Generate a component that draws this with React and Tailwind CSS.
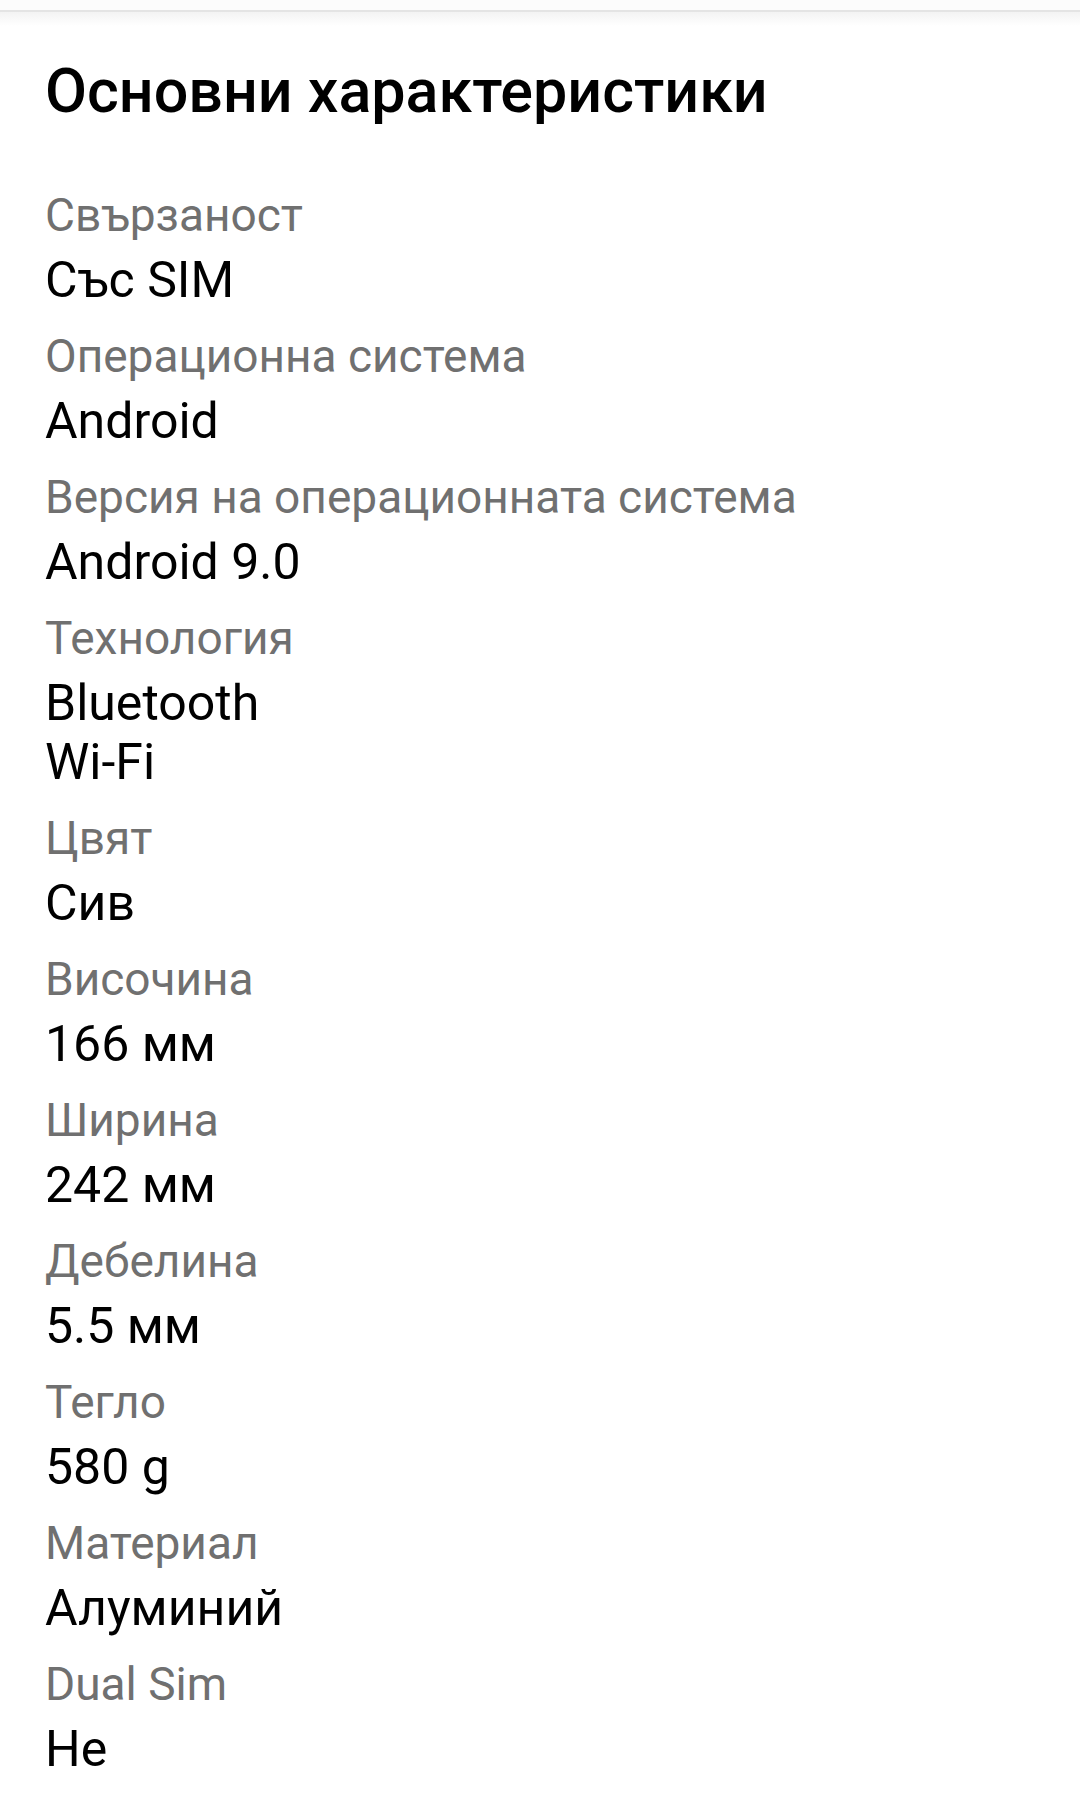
import React from 'react';

const specs = [
  { label: 'Свързаност', value: ['Със SIM'] },
  { label: 'Операционна система', value: ['Android'] },
  { label: 'Версия на операционната система', value: ['Android 9.0'] },
  { label: 'Технология', value: ['Bluetooth', 'Wi-Fi'] },
  { label: 'Цвят', value: ['Сив'] },
  { label: 'Височина', value: ['166 мм'] },
  { label: 'Ширина', value: ['242 мм'] },
  { label: 'Дебелина', value: ['5.5 мм'] },
  { label: 'Тегло', value: ['580 g'] },
  { label: 'Материал', value: ['Алуминий'] },
  { label: 'Dual Sim', value: ['Не'] },
];

const SpecRow = ({ label, value }) => (
  <div className="pb-[21px]">
    <div className="text-[46px] leading-[50px] text-[#707070]">{label}</div>
    <div className="mt-[11px] text-[50px] leading-[59px] text-black">
      {value.map((line) => (
        <div key={line}>{line}</div>
      ))}
    </div>
  </div>
);

export default function App() {
  return (
    <div className="min-h-[1801px] w-[1080px] bg-white" style={{ fontFamily: 'Roboto, "Noto Sans", sans-serif' }}>
      {/* top bar edge with soft shadow */}
      <div className="h-[10px] bg-[#fcfcfc]" />
      <div className="h-[2px] bg-[#e4e4e4]" />
      <div className="h-[14px] bg-gradient-to-b from-[#f3f3f3] to-white" />

      <div className="px-[45px]">
        <h2 className="mt-[30px] text-[61px] leading-[70px] font-medium text-black">Основни характеристики</h2>
        <div className="mt-[64px]">
          {specs.map((s) => (
            <SpecRow key={s.label} label={s.label} value={s.value} />
          ))}
        </div>
      </div>
    </div>
  );
}
